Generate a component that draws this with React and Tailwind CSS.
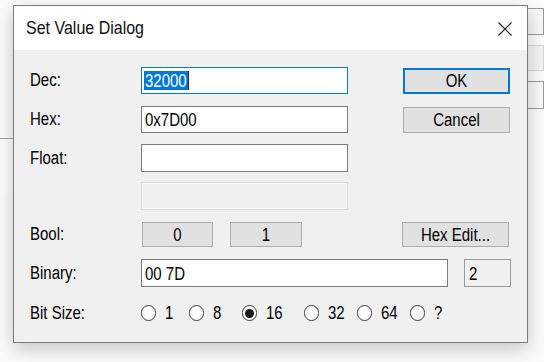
import React from 'react';

const font = { fontFamily: '"Liberation Sans", Arial, sans-serif' };

// text in the shot is a bit taller than it is wide
function T({ children, className = '' }) {
  return <span className={`inline-block scale-y-[1.2] leading-none ${className}`}>{children}</span>;
}

function Label({ children }) {
  return (
    <div className="w-[111px] shrink-0 text-[15px] text-[#000]">
      <T>{children}</T>
    </div>
  );
}

function Field({ value, width = 'w-[207px]', focused = false, children }) {
  return (
    <div
      className={`${width} h-full flex items-center bg-white border pl-[3px] text-[15px] text-black ${
        focused ? 'border-[#0078d7]' : 'border-[#7a7a7a]'
      }`}
    >
      {children || <T>{value}</T>}
    </div>
  );
}

function Btn({ label, width = 'w-[107px]', primary = false }) {
  return (
    <div
      className={`${width} h-full flex items-center justify-center bg-[#e1e1e1] text-[15px] text-black ${
        primary ? 'border-2 border-[#0078d7]' : 'border border-[#adadad]'
      }`}
    >
      <T>{label}</T>
    </div>
  );
}

function Radio({ label, checked, width }) {
  return (
    <div className={`${width} flex items-center shrink-0`}>
      <div className="w-[15px] h-[16px] shrink-0 rounded-full border border-[#3a3a3a] bg-white flex items-center justify-center">
        {checked && <div className="w-[9px] h-[9px] rounded-full bg-[#1a1a1a]" />}
      </div>
      <div className="ml-[9px] text-[15px] text-black">
        <T>{label}</T>
      </div>
    </div>
  );
}

export default function App() {
  return (
    <div className="relative w-[544px] h-[362px] overflow-hidden bg-[#fbfbfb]" style={font}>
      {/* window behind the dialog */}
      <div className="flex flex-col items-end pt-[8px] gap-[10px]">
        <div className="w-[40px] h-[27px] bg-[#f8f8f8] border border-[#9a9a9a]" />
        <div className="w-[40px] h-[26px] bg-[#f4f4f4] border border-[#d4d4d4]" />
        <div className="w-[40px] h-[28px] bg-[#f8f8f8] border border-[#9a9a9a]" />
      </div>
      <div className="mt-[29px] w-[20px] h-[60px] border-t border-[#a0a0a0] bg-[#fdfdfd]" />

      {/* dialog */}
      <div className="absolute left-[13px] top-[5px] w-[515px] h-[338px] flex flex-col border border-[#7c7c7c] bg-[#f0f0f0] shadow-[0_6px_18px_rgba(0,0,0,0.22)]">
        <div className="h-[44px] shrink-0 bg-white flex items-center justify-between pl-[12px] pr-[14px]">
          <div className="text-[16px] text-[#111]">
            <T>Set Value Dialog</T>
          </div>
          <svg width="16" height="16" viewBox="0 0 16 16" className="mt-[1px]">
            <path d="M1.5 1.5 L14.5 14.5 M14.5 1.5 L1.5 14.5" stroke="#222" strokeWidth="1.2" fill="none" />
          </svg>
        </div>

        <div className="flex-1 flex flex-col pl-[16px] pt-[17px]">
          <div className="flex items-center h-[27px]">
            <Label>Dec:</Label>
            <Field focused>
              <span className="relative flex items-center h-[19px] bg-[#0078d7] text-white px-[1px] -ml-[1px]">
                <T>32000</T>
              </span>
              <span className="w-[1px] h-[19px] bg-[#222]" />
            </Field>
            <div className="ml-[55px] h-[26px]">
              <Btn label="OK" primary />
            </div>
          </div>

          <div className="flex items-center h-[27px] mt-[12px]">
            <Label>Hex:</Label>
            <Field value="0x7D00" />
            <div className="ml-[55px] h-[26px]">
              <Btn label="Cancel" />
            </div>
          </div>

          <div className="flex items-center h-[28px] mt-[11px]">
            <Label>Float:</Label>
            <Field value="" />
          </div>

          <div className="flex items-center h-[28px] mt-[10px]">
            <div className="w-[111px] shrink-0" />
            <div className="w-[207px] h-full bg-[#f0f0f0] border border-[#d9d9d9] shadow-[inset_0_0_0_1px_#fafafa]" />
          </div>

          <div className="flex items-center h-[25px] mt-[12px]">
            <Label>Bool:</Label>
            <div className="flex h-full gap-[17px] ml-[1px]">
              <Btn label="0" width="w-[71px]" />
              <Btn label="1" width="w-[72px]" />
            </div>
            <div className="ml-[100px] h-full">
              <Btn label="Hex Edit..." />
            </div>
          </div>

          <div className="flex items-center h-[28px] mt-[12px]">
            <Label>Binary:</Label>
            <Field value="00 7D" width="w-[307px]" />
            <div className="ml-[16px] w-[47px] h-full flex items-center pl-[4px] bg-[#f0f0f0] border border-[#9a9a9a] text-[15px] text-black">
              <T>2</T>
            </div>
          </div>

          <div className="flex items-center h-[20px] mt-[16px]">
            <Label>Bit Size:</Label>
            <Radio label="1" width="w-[48px]" />
            <Radio label="8" width="w-[53px]" />
            <Radio label="16" checked width="w-[62px]" />
            <Radio label="32" width="w-[53px]" />
            <Radio label="64" width="w-[53px]" />
            <Radio label="?" width="w-[40px]" />
          </div>
        </div>
      </div>
    </div>
  );
}
